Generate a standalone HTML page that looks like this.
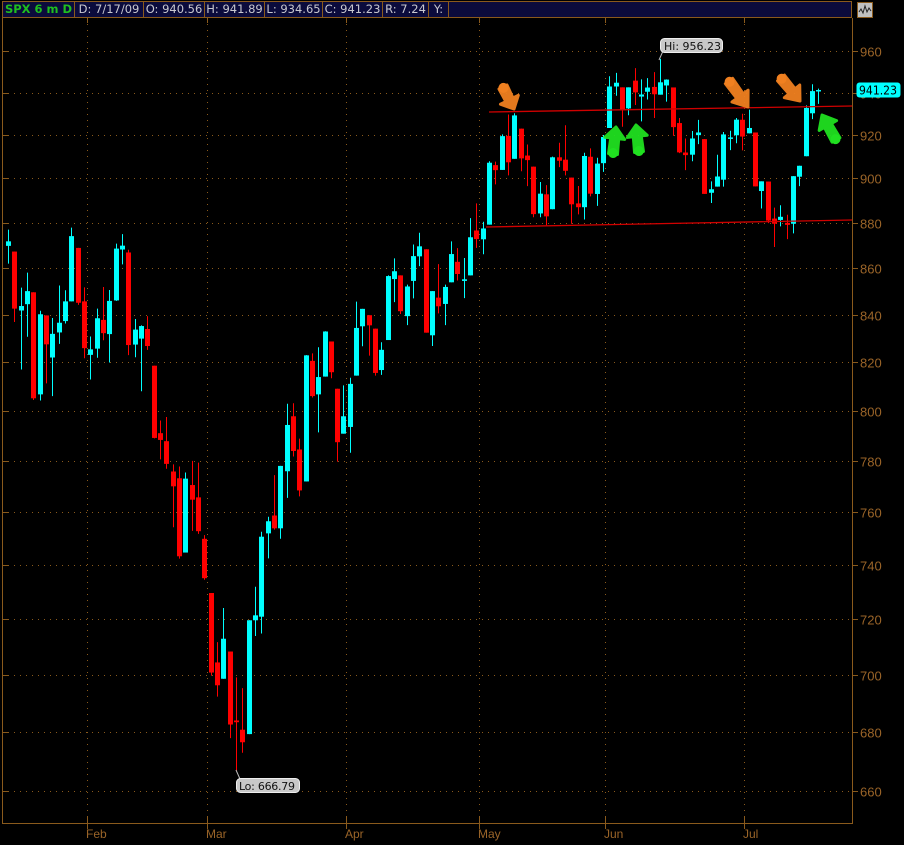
<!DOCTYPE html>
<html><head><meta charset="utf-8">
<style>
html,body{margin:0;padding:0;background:#000;width:904px;height:845px;overflow:hidden;font-family:"DejaVu Sans","Liberation Sans",sans-serif}
#hdr{position:absolute;left:2px;top:1px;height:17px;width:850px;background:#0b0b3c;border:1px solid #8a5a1c;box-sizing:border-box;font-size:11.5px;color:#c8c8d0}
#hdr div{position:absolute;top:0;height:15px;border-right:1px solid #8a5a1c;line-height:15px;white-space:nowrap;box-sizing:border-box;text-align:center;overflow:hidden}
#hdr .g{color:#1fbf1f;font-weight:bold}
#ic{position:absolute;left:857px;top:2px;width:16px;height:16px;border:1px solid #8a5a1c;background:#c0c0c0;box-sizing:border-box}
svg{position:absolute;left:0;top:0}
</style></head><body>
<div id="hdr"><div class="g" style="left:0;width:72px">SPX 6 m D</div><div style="left:72px;width:69px">D: 7/17/09</div><div style="left:141px;width:61px">O: 940.56</div><div style="left:202px;width:60px">H: 941.89</div><div style="left:262px;width:58px">L: 934.65</div><div style="left:320px;width:60px">C: 941.23</div><div style="left:380px;width:46px">R: 7.24</div><div style="left:426px;width:20px">Y:</div></div>
<div id="ic"><svg width="14" height="14" style="left:0;top:0"><path d="M1 9 L3 6 L5 10 L7 3 L9 9 L11 5 L13 8" stroke="#222" fill="none" stroke-width="1"/></svg></div>
<svg id="c" width="904" height="845"></svg>
<script>
var D=[[869.8,877,862,871.8],[867.3,867.3,836.9,842.6],[841.8,851.6,817,843.7],[844.5,858.1,830.7,850.1],[849.6,849.6,804.5,805.2],[806.8,841.7,804.3,840.2],[839.7,839.7,811.3,827.5],[822,838.6,806.1,831.9],[832.5,852.5,827.7,836.6],[837.3,850.5,836.3,845.7],[845.7,877.9,845.7,874.1],[868.9,868.9,844.2,845.1],[845.7,851.7,821.7,825.9],
[823.1,830.8,812.9,825.4],[825.7,842.6,821.9,838.5],[837.8,851.9,829.2,832.2],[831.8,850.6,819.9,845.9],[846.1,870.8,845.9,868.6],[868.2,875,861.7,869.9],[866.9,868.1,823,827.2],[827.4,838.2,822.1,833.7],[829.9,835.5,808.1,835.2],[833.95,839.4,825.2,826.8],[818.6,818.6,789,789.2],[791.1,796.2,780.7,788.4],[787.9,797.6,777,778.9],[775.9,778.7,754.3,770.1],[773.25,777.85,742.4,743.3],[744.7,775.5,744.7,773.1],[770.6,780.1,752.9,764.9],[765.8,779.4,751.8,752.8],[749.9,751.3,734.5,735.1],
[729.6,729.6,699.7,700.8],[704.4,711.7,692.3,696.3],[698.6,724.1,698.6,712.9],[708.3,708.3,677.9,682.6],[684,699.1,666.8,683.4],[680.8,695.3,672.9,676.5],[679.3,719.6,679.3,719.6],[719.6,731.9,713.9,721.4],[720.9,752.6,714.8,750.7],[751.97,758.3,742.5,756.6],[758.8,774.5,753.4,753.9],[753.9,778.1,749.9,778.1],[776,803,765.6,794.4],[797.9,803.2,781.8,784],[784.6,788.9,766.2,768.5],[772,823,772,822.9],[820.6,823.7,805.5,806.1],[806.8,826.3,791.4,813.9],[814.1,832.98,814.1,832.9],[828.7,828.7,813.4,815.9],[809.1,809.1,779.8,787.5],[790.9,810.5,790.9,797.9],
[793.6,813.6,783.3,811.1],[814.5,845.6,814.5,834.4],[835.1,842.5,826.7,842.5],[839.8,839.8,822.8,835.5],[834.1,834.1,814.5,815.6],[816.8,828.4,814.8,825.2],[829.3,856.9,829.3,856.6],[855.3,864.3,845.4,858.7],[856.9,856.9,840.3,841.5],[839.4,852.9,835.6,852.1],[854.5,870.4,847,865.3],[865.2,875.6,860.9,869.6],[868.3,868.3,832.4,832.4],[831.3,850.1,826.8,850.1],[847.3,861.8,840.6,843.6],[844.6,852.9,835.6,851.9],[853.9,871.8,853.9,866.2],[862.8,868.8,854.7,857.5],[854.5,864.5,847.1,855.2],[856.9,882.1,856.9,873.6],[876.6,888.7,868.9,872.8],
[872.7,880.5,866.1,877.5],[879.2,907.9,879.2,907.2],[906.1,907.7,897.3,903.8],[903.9,920.3,903.9,919.5],[919.6,929.6,901.4,907.4],[909,930.2,909,929.2],[922.99,922.99,903.3,909.2],[910.5,915.6,896.5,908.4],[905.4,905.4,882.5,883.9],[884.2,898.4,882.5,893.1],[892.8,896.97,878.9,882.9],[886.1,910,886.1,909.7],[909.7,916.4,905.2,908.1],[908.6,924.6,901.4,903.5],[900.4,900.4,879.6,888.3],[888.7,896.6,883.8,887],[887,911.8,881.5,910.3],[909.95,913.8,891.9,893.1],[892.96,909.5,887.6,906.8],[907,920,903,919.1],
[923.3,947.8,923.3,942.9],[942.9,949.4,938.5,944.7],[942.5,942.5,923.9,931.8],[932.5,942.5,929.3,942.5],[945.7,951.7,934.1,940.1],[938.1,946.3,926.4,939.1],[940.4,946.9,936.7,942.4],[942.7,949.8,928,939.2],[939,956.2,939,944.9],[943.4,946.3,935.7,946.2],[942.45,942.45,919.65,923.7],[925.6,928,911.6,911.97],[911.9,918.4,903.8,910.7],[910.9,921.9,907.9,918.4],[919.96,927.1,915.8,921.2],[918.1,918.1,893,893],[893.5,898.7,888.9,895.1],[896.3,910.85,896.3,900.9],[899.45,921.4,896.3,920.3],[918.8,922,913,918.9],[919.9,928,916.2,927.2],[927.15,930,912.9,919.3],
[920.8,931.9,920.8,923.3],[921.2,921.2,896.4,896.4],[894.3,898.7,886.4,898.7],[898.6,898.6,879.9,881],[881.9,886.8,869.3,879.6],[881.3,887.9,878.45,882.7],[880,883.6,872.8,879.1],[879.6,901.05,875.3,901.05],[900.8,905.8,896.5,905.8],[910.2,933.95,910.2,932.7],[930.2,943.96,927.45,940.7],[940.56,941.89,934.65,941.23]];
function Y(p){return 51+1975*(Math.log(960)-Math.log(p));}
var s='',B='#8a5a1c';
var levels=[960,940,920,900,880,860,840,820,800,780,760,740,720,700,680,660];
levels.forEach(function(l){var y=Math.round(Y(l))+.5;
 s+='<line x1="2" y1="'+y+'" x2="852" y2="'+y+'" stroke="'+B+'" stroke-dasharray="1,5"/>';
 s+='<line x1="2" y1="'+y+'" x2="9" y2="'+y+'" stroke="'+B+'"/><line x1="852" y1="'+y+'" x2="858" y2="'+y+'" stroke="'+B+'"/>';
 s+='<text x="860" y="'+(y+5)+'" fill="#9a6428" font-size="13" font-family="Liberation Sans Narrow,Liberation Sans,sans-serif">'+l+'</text>';});
var mx=[[87,'Feb'],[207,'Mar'],[346,'Apr'],[479,'May'],[605,'Jun'],[744,'Jul']];
mx.forEach(function(m){var x=m[0]+.5;
 s+='<line x1="'+x+'" y1="18" x2="'+x+'" y2="823" stroke="'+B+'" stroke-dasharray="1,5"/>';
 s+='<line x1="'+x+'" y1="18" x2="'+x+'" y2="23" stroke="'+B+'"/><line x1="'+x+'" y1="817" x2="'+x+'" y2="829" stroke="'+B+'"/>';
 s+='<text x="'+(m[0]-1)+'" y="838" fill="#9a6428" font-size="12" font-family="Liberation Sans Narrow,Liberation Sans,sans-serif">'+m[1]+'</text>';});
s+='<line x1="2.5" y1="18" x2="2.5" y2="823" stroke="'+B+'"/><line x1="852.5" y1="18" x2="852.5" y2="823" stroke="'+B+'"/><line x1="2" y1="823.5" x2="853" y2="823.5" stroke="'+B+'"/>';
D.forEach(function(d,i){var x=Math.round(8+i*6.33);var c=d[3]>=d[0]?'#00ffff':'#ff0000';
 var yh=Y(d[1]),yl=Y(d[2]),yo=Y(d[0]),yc=Y(d[3]);var t=Math.min(yo,yc),b=Math.max(Math.abs(yo-yc),1.5);
 s+='<line x1="'+(x+.5)+'" y1="'+yh+'" x2="'+(x+.5)+'" y2="'+yl+'" stroke="'+c+'"/>';
 s+='<rect x="'+(x-2)+'" y="'+t+'" width="5" height="'+b+'" fill="'+c+'"/>';});
s+='<line x1="489" y1="112" x2="852" y2="106" stroke="#d00000" stroke-width="1.3"/>';
s+='<line x1="486" y1="227" x2="852" y2="220" stroke="#d00000" stroke-width="1.3"/>';
function arrow(tx,ty,hx,hy,c){var dx=hx-tx,dy=hy-ty,L=Math.sqrt(dx*dx+dy*dy),a=Math.atan2(dy,dx)*180/Math.PI;
 var h=L*0.42;
 s+='<g transform="translate('+tx+','+ty+') rotate('+a+')"><path d="M0,-4.5 L'+(L-h)+',-4 L'+(L-h)+',-10 L'+L+',0 L'+(L-h)+',10 L'+(L-h)+',4 L0,4.5 Z" fill="'+c+'" stroke="'+c+'" stroke-width="3" stroke-linejoin="round" opacity="0.95"/><circle cx="1" cy="0" r="5" fill="'+c+'"/></g>';}
arrow(503,87,514,109,'#f08020');arrow(729,81,748,107,'#f08020');arrow(781,78,800,101,'#f08020');
arrow(613,154,616,127,'#20e020');arrow(639,152,636,125,'#20e020');arrow(836,140,822,115,'#20e020');
s+='<line x1="659" y1="60" x2="663" y2="51" stroke="#bbb"/><rect x="660.5" y="38.5" width="62" height="14" rx="4" fill="#c8c8c8" stroke="#eee"/><text x="664" y="50" font-size="11" fill="#111">Hi: 956.23</text>';
s+='<line x1="236" y1="770" x2="240" y2="779" stroke="#bbb"/><rect x="236.5" y="778.5" width="63" height="14" rx="4" fill="#c8c8c8" stroke="#eee"/><text x="239" y="790" font-size="11" fill="#111" textLength="56">Lo: 666.79</text>';
s+='<rect x="856.5" y="82.5" width="44" height="15" rx="3" fill="#00ffff"/><text x="859" y="94.5" font-size="12" fill="#000" textLength="38" lengthAdjust="spacingAndGlyphs">941.23</text>';
document.getElementById('c').innerHTML=s;
</script>
</body></html>
